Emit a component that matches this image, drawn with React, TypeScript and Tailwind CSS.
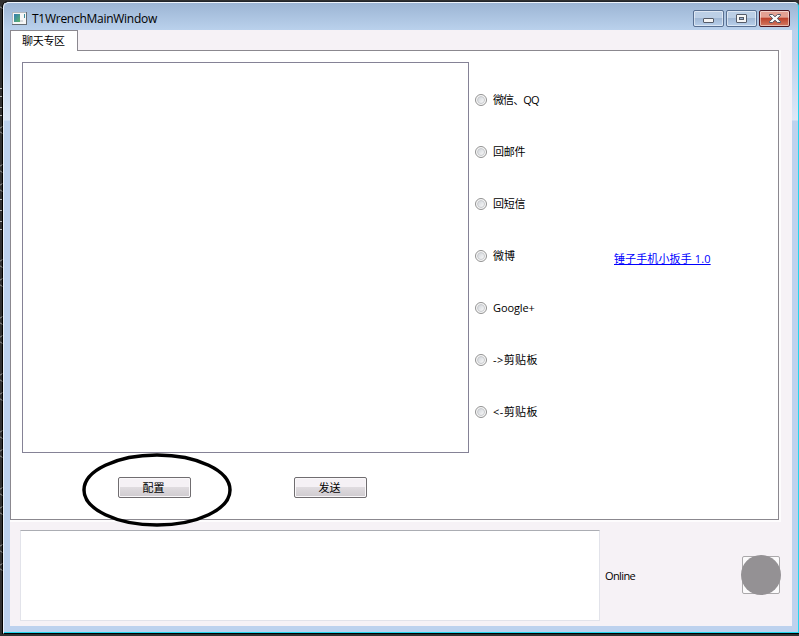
const UI_FONT = "font-['Open_Sans','Noto_Sans_CJK_SC',sans-serif]";

const options = [
  { label: '微信、QQ', spacing: 'tracking-[-0.9px]' },
  { label: '回邮件', spacing: 'tracking-[-0.2px]' },
  { label: '回短信', spacing: 'tracking-[-0.2px]' },
  { label: '微博', spacing: '' },
  { label: 'Google+', spacing: 'tracking-[-0.1px]' },
  { label: '->剪贴板', spacing: 'tracking-[0.4px]' },
  { label: '<-剪贴板', spacing: 'tracking-[0.4px]' },
];

const backdropDashes = [88, 96, 107, 115, 199, 210, 221, 229];
const backdropTicks = [7, 127, 132, 165, 171, 184, 190, 260, 266, 279, 285, 317, 323, 336, 342, 374, 380, 393, 399, 431, 437, 450, 456, 488, 494, 507, 513, 545, 551, 564, 569];

function Radio({ label, spacing }: { label: string; spacing: string }) {
  return (
    <label className="flex h-[52px] items-center gap-[6px]">
      <span className="flex size-[12px] shrink-0 items-center justify-center rounded-full border border-[#929292] bg-[#f8f8f8]">
        <span className="size-[8px] rounded-full border border-[#c8cacd] bg-linear-to-br from-[#d0d4d9] to-[#fafafa]" />
      </span>
      <span className={`whitespace-nowrap ${spacing}`}>{label}</span>
    </label>
  );
}

function PushButton({ children }: { children: string }) {
  return (
    <button className="h-[21px] w-[73px] rounded-[2px] border border-[#706d70] bg-linear-to-b from-[#f5f1f5] from-45% via-[#dfdbdf] via-50% to-[#cfcbcf] pr-[2px] text-[11px] leading-[18px] shadow-[inset_0_0_0_1px_#faf8fa]">
      {children}
    </button>
  );
}

function Captions() {
  const base = 'flex h-[17px] w-[31px] items-center justify-center rounded-[2px] border shadow-[inset_0_0_0_1px_rgba(255,255,255,0.5)]';
  const blue = 'border-[#586f91] bg-linear-to-b from-[#bccfe6] from-45% via-[#a1b8d5] via-50% to-[#b9d0eb]';
  return (
    <div className="flex gap-[2px] pt-[7px]">
      <div className={`${base} ${blue}`}>
        <svg className="mt-[3px]" width="11" height="5" viewBox="0 0 11 5"><rect x=".5" y=".5" width="10" height="4" rx="0.5" fill="#f5f5f5" stroke="#555b68" /></svg>
      </div>
      <div className={`${base} ${blue}`}>
        <svg width="11" height="9" viewBox="0 0 11 9"><rect x=".5" y=".5" width="10" height="8" rx="0.5" fill="#f5f5f5" stroke="#555b68" /><rect x="3.5" y="3.5" width="4" height="2" fill="#9bb3d2" stroke="#555b68" /></svg>
      </div>
      <div className={`${base} border-[#4c1520] bg-linear-to-b from-[#e3a092] from-40% via-[#bd432d] via-50% to-[#d27862]`}>
        <svg width="12" height="9" viewBox="0 0 12 9">
          <path d="M.5.5h3L6 2.7 8.500.5h3v1L8.300 4.500l3.200 3v1h-3L6 6.300 3.500 8.500h-3v-1l3.200-3-3.200-3z" fill="#fafafa" stroke="#535666" />
        </svg>
      </div>
    </div>
  );
}

export default function App() {
  return (
    <div className={`relative flex h-[636px] w-[799px] overflow-hidden bg-[#303030] text-[11px] leading-[16px] text-black ${UI_FONT}`}>
      <svg className="absolute left-0 top-0" width="3" height="636">
        {backdropDashes.map((y) => <path key={y} d={`M0 ${y + 0.5}h2`} stroke="#b5b5b5" />)}
        {backdropTicks.map((y, i) => <path key={y} d={i % 2 ? `M0 ${y + 1.5}l2 -2` : `M0 ${y - 0.5}l2 2`} stroke="#b5b5b5" />)}
      </svg>
      <div className="ml-[3px] mt-px flex h-[633px] w-[796px] flex-col rounded-t-[6px] border-b border-l border-t border-b-black border-l-[#e8f1fb] border-t-[#20242a] bg-[#bdd2ee] shadow-[-1px_0_0_0_black]">
        <div className="h-full rounded-t-[5px] border-b border-r border-t border-b-[#20d6ee] border-r-[#20d6ee] border-t-[#eef4fb] bg-[linear-gradient(#9cb5d4_0,#bad1ec_27px,#bdd2ee_50px,#dce8f7_117px,#bdd2ee_118px)] pl-[6px] pr-[6px]">
          <header className="flex h-[27px] justify-between pr-[2px]">
            <div className="flex items-center gap-[5px] pl-[2px] pt-[4px]">
              <svg width="15" height="13" viewBox="0 0 15 13">
                <defs>
                  <linearGradient id="screen" x2="1" y2="1"><stop stopColor="#327bb4" /><stop offset="1" stopColor="#5eb56b" /></linearGradient>
                </defs>
                <rect x=".5" y=".5" width="14" height="12" fill="#f7f7f7" stroke="#b4b9bf" />
                <path d="M0 12.500h15M14.500 0v13" stroke="#666c72" />
                <path d="M2 2h6v8H2z" fill="url(#screen)" />
                <path d="M8 8h3v2H8z" fill="#d6d9dc" />
                <path d="M12 2h1v4h-1z" fill="#3d90a1" />
              </svg>
              <h1 className="text-[12px] tracking-[-0.27px]">T1WrenchMainWindow</h1>
            </div>
            <Captions />
          </header>
          <main className="h-[596px] w-[782px] bg-[#f6f2f6]">
            <nav className="flex h-[20px]">
              <div className="z-10 h-[21px] w-[68px] border border-b-0 border-[#8b888f] bg-white pl-[11px] pt-[2px] tracking-[-0.3px]">聊天专区</div>
            </nav>
            <section className="flex h-[470px] w-[769px] flex-col border border-[#8b888f] bg-white pl-[11px] pt-[11px] shadow-[1px_1px_0_1px_#fdfcfd]">
              <div className="flex h-[391px]">
                <textarea className="w-[447px] resize-none border border-[#858296] bg-white outline-none" />
                <div className="ml-[6px] w-[110px] pt-[12px]">
                  {options.map((option) => <Radio key={option.label} {...option} />)}
                </div>
                <a className="ml-[29px] mt-[189px] self-start whitespace-nowrap tracking-[0.12px] text-[#0000ff] underline" href="#about">锤子手机小扳手 1.0</a>
              </div>
              <div className="relative flex gap-[103px] pl-[96px] pt-[24px]">
                <PushButton>配置</PushButton>
                <PushButton>发送</PushButton>
                <svg className="absolute left-[59px] top-0" width="152" height="75" viewBox="0 0 152 75">
                  <ellipse cx="76" cy="37" rx="73" ry="35" fill="none" stroke="black" strokeWidth="3.5" />
                </svg>
              </div>
            </section>
            <footer className="flex pl-[10px] pt-[10px]">
              <div className="h-[91px] w-[580px] border border-[#e2e3ea] border-t-[#abadb3] bg-white" />
              <span className="ml-[5px] mt-[38px] w-[137px] tracking-[-0.6px]">Online</span>
              <div className="relative mt-[26px] size-[38px] rounded-[2px] border border-[#aaa8aa] bg-[#fbfafb]">
                <span className="absolute -left-[2px] -top-[2px] size-[40px] rounded-full bg-[#949194]" />
              </div>
            </footer>
          </main>
        </div>
      </div>
    </div>
  );
}
